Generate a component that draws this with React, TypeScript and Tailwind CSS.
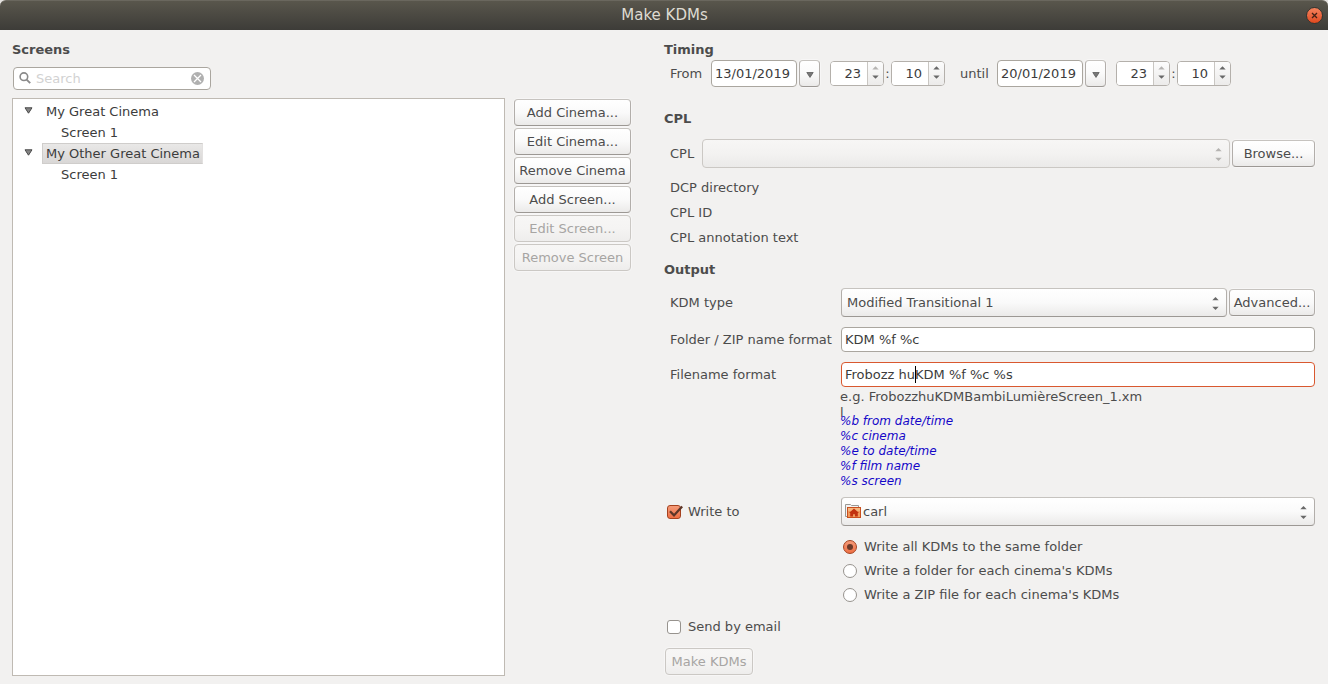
import React, { useState } from 'react';

const BUTTON =
  'flex h-[27px] items-center justify-center whitespace-nowrap rounded-[4px] border border-t-[#c6c3bf] border-x-[#b2aeaa] border-b-[#9c9894] bg-linear-to-b from-white via-[#fafafa] to-[#ebeae9] text-[#4c4c4c] shadow-[0_0_0_1px_rgba(255,255,255,0.4)] disabled:border-[#cbc8c4] disabled:from-[#f7f6f5] disabled:via-[#f5f4f3] disabled:to-[#eeedec] disabled:text-[#a7a5a3]';

const FIELD =
  'rounded-[4px] border border-[#aaa69f] bg-white px-[3px] text-[#3c3c3c] outline-none focus:border-[#d9582f]';

const HEADING = 'h-4 text-[13px] leading-4 font-bold text-[#4c4c4c]';

type ButtonProps = React.ButtonHTMLAttributes<HTMLButtonElement>;

function PushButton({ className = '', ...rest }: ButtonProps) {
  return <button type="button" className={`${BUTTON} ${className}`} {...rest} />;
}

function UpDownIcon({ className = '' }: { className?: string }) {
  return (
    <svg className={className} width="7" height="13" viewBox="0 0 7 13" fill="currentColor" aria-hidden="true">
      <path d="M0.3 3.2 L3.5 0 L6.7 3.2 Z" />
      <path d="M0.3 9.8 L3.5 13 L6.7 9.8 Z" />
    </svg>
  );
}

type ComboProps = {
  id: string;
  options: string[];
  disabled?: boolean;
  icon?: React.ReactNode;
};

function Combo({ id, options, disabled, icon }: ComboProps) {
  return (
    <div className="relative min-w-0 flex-1">
      <select
        id={id}
        disabled={disabled}
        className={`block h-[29px] w-full appearance-none rounded-[4px] border border-t-[#c6c3bf] border-x-[#b2aeaa] border-b-[#9c9894] bg-linear-to-b from-white via-[#fafafa] to-[#ebeae9] pr-6 text-[#4c4c4c] outline-none disabled:border-[#cbc8c4] disabled:from-[#f7f6f5] disabled:via-[#f3f2f1] disabled:to-[#ebeae9] disabled:opacity-100 ${icon ? 'pl-[21px]' : 'pl-[5px]'}`}
      >
        {options.map((o) => (
          <option key={o}>{o}</option>
        ))}
      </select>
      {icon && <span className="pointer-events-none absolute top-[6px] left-1">{icon}</span>}
      <UpDownIcon
        className={`pointer-events-none absolute top-[9px] right-2 ${disabled ? 'text-[#b5b3b1]' : 'text-[#686868]'}`}
      />
    </div>
  );
}

function Spin({ label, initial, max }: { label: string; initial: number; max: number }) {
  const [value, setValue] = useState(initial);
  const atTop = value >= max;
  return (
    <div className="flex h-[25px] w-[54px] overflow-hidden rounded-[4px] border border-[#b4b0ab] bg-white">
      <input
        aria-label={label}
        value={value}
        onChange={(e) => setValue(Math.min(max, Number(e.target.value) || 0))}
        className="w-9 min-w-0 bg-white pr-1.5 text-right text-[#3c3c3c] outline-none"
      />
      <div className="flex flex-1 flex-col border-l border-[#c9c6c2] bg-linear-to-b from-[#fcfcfc] to-[#ecebea] text-[#686868]">
        <button
          type="button"
          aria-label={`Increase ${label}`}
          disabled={atTop}
          onClick={() => setValue(value + 1)}
          className="flex flex-1 items-center justify-center pt-0.5 disabled:text-[#b5b3b1]"
        >
          <svg width="7" height="4" viewBox="0 0 7 4" fill="currentColor">
            <path d="M0.3 3.5 L3.5 0.3 L6.7 3.5 Z" />
          </svg>
        </button>
        <button
          type="button"
          aria-label={`Decrease ${label}`}
          onClick={() => setValue(Math.max(0, value - 1))}
          className="flex flex-1 items-center justify-center pb-1"
        >
          <svg width="7" height="4" viewBox="0 0 7 4" fill="currentColor">
            <path d="M0.3 0.5 L3.5 3.7 L6.7 0.5 Z" />
          </svg>
        </button>
      </div>
    </div>
  );
}

function DateTime({ name, date }: { name: string; date: string }) {
  return (
    <div className="flex items-center">
      <input id={`${name}-date`} defaultValue={date} className={`${FIELD} mr-0.5 h-[27px] w-[86px]`} />
      <PushButton className="mr-2.5 w-[21px]" aria-label={`Choose ${name} date`}>
        <svg className="mt-0.5" width="8" height="6" viewBox="0 0 8 6" aria-hidden="true">
          <path d="M0.8 0.5 H7.2 L4 5.4 Z" fill="#777" stroke="#5c5c5c" strokeWidth="0.8" />
        </svg>
      </PushButton>
      <Spin label={`${name} hour`} initial={23} max={23} />
      <span className="w-[7px] text-center">:</span>
      <Spin label={`${name} minute`} initial={10} max={59} />
    </div>
  );
}

function Check({ label, checked, onChange }: { label: string; checked: boolean; onChange: () => void }) {
  return (
    <label className="flex items-center gap-[7px] pl-[3px]">
      <span className="relative flex">
        <input
          type="checkbox"
          checked={checked}
          onChange={onChange}
          className="size-[14px] appearance-none rounded-[3px] border border-[#97938e] bg-white checked:border-[#a5421f] checked:bg-linear-to-b checked:from-[#f59a78] checked:to-[#ee6f43]"
        />
        {checked && (
          <svg className="pointer-events-none absolute top-0 left-0" width="16" height="14" viewBox="0 0 16 14" fill="none" aria-hidden="true">
            <path d="M3 6.2 L7 10.4 L15.2 1.4" stroke="#5d3628" strokeWidth="2.3" />
          </svg>
        )}
      </span>
      {label}
    </label>
  );
}

function Row({ label, htmlFor, children }: { label: React.ReactNode; htmlFor?: string; children: React.ReactNode }) {
  return (
    <div className="flex items-center">
      {htmlFor ? (
        <label htmlFor={htmlFor} className="w-[177px] shrink-0 pl-1.5 whitespace-nowrap">
          {label}
        </label>
      ) : (
        <div className="w-[177px] shrink-0">{label}</div>
      )}
      <div className="flex min-w-0 flex-1 items-center gap-0.5">{children}</div>
    </div>
  );
}

function HomeFolderIcon() {
  return (
    <svg width="16" height="16" viewBox="0 0 16 16" aria-hidden="true">
      <path d="M0.5 13.5 V1.5 H5.5 L6.5 2.5 H13.5 V13.5 Z" fill="#f4f3f1" stroke="#9a9895" />
      <rect x="2.5" y="4.5" width="13" height="10" fill="#f19a5c" stroke="#c9501f" />
      <rect x="3" y="5" width="12" height="3" fill="#f6b67d" />
      <path d="M9 5.6 L14 10 H12.8 V13.6 H10 V11.2 H8 V13.6 H5.2 V10 H4 Z" fill="#c2320f" />
    </svg>
  );
}

const TREE = [
  { name: 'My Great Cinema', screens: ['Screen 1'], selected: false },
  { name: 'My Other Great Cinema', screens: ['Screen 1'], selected: true },
];

const ACTIONS = [
  { label: 'Add Cinema...', disabled: false },
  { label: 'Edit Cinema...', disabled: false },
  { label: 'Remove Cinema', disabled: false },
  { label: 'Add Screen...', disabled: false },
  { label: 'Edit Screen...', disabled: true },
  { label: 'Remove Screen', disabled: true },
];

const DESTINATIONS = [
  'Write all KDMs to the same folder',
  "Write a folder for each cinema's KDMs",
  "Write a ZIP file for each cinema's KDMs",
];

const CODES = ['%b from date/time', '%c cinema', '%e to date/time', '%f film name', '%s screen'];

function TitleBar() {
  return (
    <header className="flex h-[30px] items-center rounded-t-[6px] border-t border-[#6a675e] bg-linear-to-b from-[#59564c] to-[#3d3c38] px-[5px]">
      <h1 className="flex-1 pb-0.5 pl-[18px] text-center text-[15px] text-[#dfdbd2]">Make KDMs</h1>
      <button
        type="button"
        aria-label="Close"
        className="flex size-[17px] items-center justify-center rounded-full border border-[#35342f] bg-linear-to-b from-[#f4825c] to-[#e0481c]"
      >
        <svg width="7" height="7" viewBox="0 0 7 7" aria-hidden="true">
          <path d="M1 1 L6 6 M6 1 L1 6" stroke="#432115" strokeWidth="1.3" />
        </svg>
      </button>
    </header>
  );
}

function ScreensPane() {
  return (
    <section className="flex min-w-0 flex-col">
      <h2 className={`${HEADING} mt-3`}>Screens</h2>
      <div className="mt-[9px] ml-px flex h-[23px] w-[198px] items-center rounded-[4px] border border-[#aaa69f] bg-white pr-1.5 pl-[5px]">
        <svg className="mb-0.5" width="12" height="12" viewBox="0 0 12 12" fill="none" aria-hidden="true">
          <circle cx="4.9" cy="4.7" r="3.8" stroke="#8a8a8a" strokeWidth="1.6" />
          <path d="M7.6 7.6 L11.2 11.2" stroke="#8a8a8a" strokeWidth="1.9" />
        </svg>
        <input
          aria-label="Search"
          placeholder="Search"
          className="ml-[5px] min-w-0 flex-1 bg-transparent text-[#3c3c3c] outline-none placeholder:text-[#d2d2d2]"
        />
        <button type="button" aria-label="Clear search">
          <svg width="13" height="13" viewBox="0 0 13 13" aria-hidden="true">
            <circle cx="6.5" cy="6.5" r="6.5" fill="#b0b0b0" />
            <path d="M3 3 L10 10 M10 3 L3 10" stroke="#fff" strokeWidth="1.3" />
          </svg>
        </button>
      </div>
      <div className="mt-2 flex flex-1 gap-[9px]">
        <ul role="tree" aria-label="Screens" className="min-w-0 flex-1 border border-[#bfbab3] bg-white pt-0.5 leading-[21px] text-[#3c3c3c]">
          {TREE.map((cinema) => (
            <li key={cinema.name} role="treeitem" aria-selected={cinema.selected}>
              <div className="flex h-[21px] items-center pl-[11px]">
                <svg className="mb-0.5" width="9" height="7" viewBox="0 0 9 7" aria-hidden="true">
                  <path d="M1 0.8 H8 L4.5 6.2 Z" fill="#858585" stroke="#484848" />
                </svg>
                <span
                  className={
                    cinema.selected
                      ? 'ml-[9px] border border-[#cfcdcb] border-r-[#e3e1e0] bg-linear-to-b from-[#e9e8e7] to-[#d9d7d6] pr-0.5 pl-[3px] leading-[19px]'
                      : 'ml-[9px] px-1'
                  }
                >
                  {cinema.name}
                </span>
              </div>
              <ul role="group">
                {cinema.screens.map((s) => (
                  <li key={s} role="treeitem" className="pl-12">
                    {s}
                  </li>
                ))}
              </ul>
            </li>
          ))}
        </ul>
        <div className="flex w-[117px] flex-col gap-0.5 pt-px">
          {ACTIONS.map((a) => (
            <PushButton key={a.label} disabled={a.disabled}>
              {a.label}
            </PushButton>
          ))}
        </div>
      </div>
    </section>
  );
}

function SettingsPane() {
  const [write, setWrite] = useState(true);
  const [email, setEmail] = useState(false);
  const [destination, setDestination] = useState(0);
  return (
    <section className="min-w-0">
      <h2 className={`${HEADING} mt-3`}>Timing</h2>
      <div className="mt-0.5 flex items-center pl-1.5">
        <label htmlFor="from-date" className="w-[41px]">
          From
        </label>
        <DateTime name="from" date="13/01/2019" />
        <label htmlFor="until-date" className="w-[52px] pl-[15px]">
          until
        </label>
        <DateTime name="until" date="20/01/2019" />
      </div>

      <h2 className={`${HEADING} mt-6`}>CPL</h2>
      <div className="mt-3 flex items-center gap-0.5 pl-1.5">
        <label htmlFor="cpl" className="w-[30px]">
          CPL
        </label>
        <Combo id="cpl" options={['']} disabled />
        <PushButton className="w-[83px]">Browse...</PushButton>
      </div>
      <dl className="mt-[7px] pl-1.5 leading-[25px]">
        <dt>DCP directory</dt>
        <dt>CPL ID</dt>
        <dt>CPL annotation text</dt>
      </dl>

      <h2 className={`${HEADING} mt-3`}>Output</h2>
      <div className="mt-2.5 flex flex-col gap-2.5">
        <Row label="KDM type" htmlFor="kdm-type">
          <Combo id="kdm-type" options={['Modified Transitional 1', 'DCI Any', 'DCI Specific']} />
          <PushButton className="w-[86px]">Advanced...</PushButton>
        </Row>
        <Row label="Folder / ZIP name format" htmlFor="folder-format">
          <input id="folder-format" defaultValue="KDM %f %c" className={`${FIELD} h-[25px] w-full`} />
        </Row>
        <Row label="Filename format" htmlFor="file-format">
          <div className="relative w-full">
            <input
              id="file-format"
              defaultValue="Frobozz huKDM %f %c %s"
              className="block h-[25px] w-full rounded-[4px] border border-[#d9582f] bg-white px-[3px] text-[#3c3c3c] caret-transparent outline-none"
            />
            <span className="absolute top-1 left-[74px] h-[17px] w-px bg-black" />
          </div>
        </Row>
      </div>
      <div className="mt-0.5 pl-44">
        <p className="h-7 w-[304px] overflow-hidden leading-4 break-all">e.g. FrobozzhuKDMBambiLumièreScreen_1.xml</p>
        <ul className="-mt-[3px] text-[12px] leading-[15px] text-[#1507c8] italic">
          {CODES.map((c) => (
            <li key={c}>{c}</li>
          ))}
        </ul>
      </div>

      <div className="mt-2">
        <Row label={<Check label="Write to" checked={write} onChange={() => setWrite(!write)} />}>
          <Combo id="write-folder" options={['carl']} icon={<HomeFolderIcon />} />
        </Row>
      </div>
      <fieldset className="mt-[9px] pl-[179px]">
        {DESTINATIONS.map((d, i) => (
          <label key={d} className="flex h-6 items-center gap-[7px]">
            <span className="relative flex">
              <input
                type="radio"
                name="destination"
                checked={destination === i}
                onChange={() => setDestination(i)}
                className="size-[14px] appearance-none rounded-full border border-[#97938e] bg-white checked:border-[#a5421f] checked:bg-linear-to-b checked:from-[#f59a78] checked:to-[#ee6f43]"
              />
              {destination === i && (
                <span className="pointer-events-none absolute inset-1 rounded-full bg-[#6b3a2a]" />
              )}
            </span>
            {d}
          </label>
        ))}
      </fieldset>
      <div className="mt-3 flex h-4 items-center">
        <Check label="Send by email" checked={email} onChange={() => setEmail(!email)} />
      </div>
      <PushButton disabled className="mt-[13px] ml-px w-[88px]">
        Make KDMs
      </PushButton>
    </section>
  );
}

export default function App() {
  return (
    <div className="bg-[#e4e2df]">
      <main className="flex min-h-screen flex-col font-['DejaVu_Sans',sans-serif] text-[13px] leading-4 text-[#4c4c4c]">
        <TitleBar />
        <div className="grid flex-1 grid-cols-[minmax(0,619fr)_minmax(0,651fr)] gap-x-[33px] bg-[#f2f1f0] pr-[13px] pb-2 pl-3">
          <ScreensPane />
          <SettingsPane />
        </div>
      </main>
    </div>
  );
}
